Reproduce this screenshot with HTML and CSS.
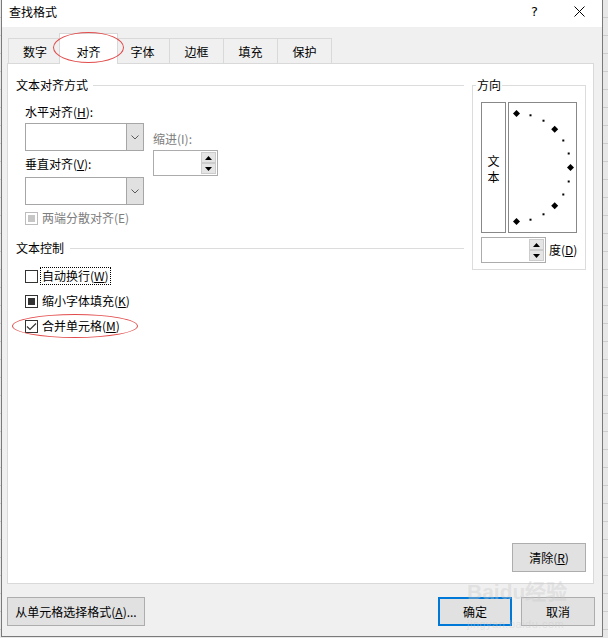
FILE: index.html
```html
<!DOCTYPE html>
<html lang="zh-CN">
<head>
<meta charset="utf-8">
<title>查找格式</title>
<link rel="stylesheet" href="styles.css">
</head>
<body>
<div class="dialog">
  <div class="titlebar">
    <span class="title">查找格式</span>
    <span class="tb-btn tb-help">?</span>
    <span class="tb-btn tb-close"><svg width="11" height="11" viewBox="0 0 11 11"><path d="M0.5 0.5L10.5 10.5M10.5 0.5L0.5 10.5" stroke="#000" stroke-width="1" fill="none"/></svg></span>
  </div>
  <div class="body">
    <div class="tabs">
      <div class="tab tab-first">数字</div>
      <div class="tab tab-active">对齐</div>
      <div class="tab">字体</div>
      <div class="tab">边框</div>
      <div class="tab">填充</div>
      <div class="tab">保护</div>
    </div>
    <div class="panel">
      <div class="panel-main">
        <div class="col-left">
          <div class="group-head"><span>文本对齐方式</span><span class="rule"></span></div>
          <div class="align-block">
            <div class="a-left">
              <div class="lbl">水平对齐(<u>H</u>):</div>
              <div class="combo"><span class="combo-field"></span><span class="combo-btn"><svg width="8" height="5" viewBox="0 0 8 5"><polyline points="0.5,0.5 4,4 7.5,0.5" fill="none" stroke="#5a5a5a" stroke-width="1"/></svg></span></div>
              <div class="lbl lbl-v">垂直对齐(<u>V</u>):</div>
              <div class="combo combo-2"><span class="combo-field"></span><span class="combo-btn"><svg width="8" height="5" viewBox="0 0 8 5"><polyline points="0.5,0.5 4,4 7.5,0.5" fill="none" stroke="#5a5a5a" stroke-width="1"/></svg></span></div>
            </div>
            <div class="a-indent">
              <div class="lbl disabled">缩进(I):</div>
              <div class="spin spin-indent">
                <div class="spin-btns">
                  <span class="spin-b"><svg width="7" height="4" viewBox="0 0 7 4"><polygon points="0,4 3.5,0 7,4" fill="#000"/></svg></span>
                  <span class="spin-b"><svg width="7" height="4" viewBox="0 0 7 4"><polygon points="0,0 3.5,4 7,0" fill="#000"/></svg></span>
                </div>
              </div>
            </div>
          </div>
          <div class="check-row row-dist"><span class="cb cb-disabled"><span class="cb-fill"></span></span><span class="cb-label disabled">两端分散对齐(E)</span></div>
          <div class="group-head head-2"><span>文本控制</span><span class="rule"></span></div>
          <div class="check-row row-1"><span class="cb"></span><span class="cb-label focused">自动换行(<u>W</u>)</span></div>
          <div class="check-row row-2"><span class="cb"><span class="cb-fill"></span></span><span class="cb-label">缩小字体填充(<u>K</u>)</span></div>
          <div class="check-row row-3"><span class="cb"><svg width="11" height="11" viewBox="0 0 11 11"><polyline points="1,5.5 4,8.5 10,2.5" fill="none" stroke="#333" stroke-width="1.2"/></svg></span><span class="cb-label">合并单元格(<u>M</u>)</span></div>
        </div>
        <div class="col-right">
          <div class="orient">
            <div class="orient-title">方向</div>
            <div class="orient-boxes">
              <div class="vtext"><span>文</span><span>本</span></div>
              <div class="dial">
                <svg width="67" height="129" viewBox="0 0 67 129">
                  <g fill="#000">
                    <polygon points="7.5,7 11,10.5 7.5,14 4,10.5"/>
                    <rect x="20.5" y="11.3" width="2" height="2"/>
                    <rect x="33.5" y="16.7" width="2" height="2"/>
                    <polygon points="45.7,22.8 49.2,26.3 45.7,29.8 42.2,26.3"/>
                    <rect x="53.3" y="36.5" width="2" height="2"/>
                    <rect x="58.7" y="49.5" width="2" height="2"/>
                    <polygon points="61.5,61 65,64.5 61.5,68 58,64.5"/>
                    <rect x="58.7" y="77.5" width="2" height="2"/>
                    <rect x="53.3" y="90.5" width="2" height="2"/>
                    <polygon points="45.7,99.2 49.2,102.7 45.7,106.2 42.2,102.7"/>
                    <rect x="33.5" y="110.3" width="2" height="2"/>
                    <rect x="20.5" y="115.7" width="2" height="2"/>
                    <polygon points="7.5,115 11,118.5 7.5,122 4,118.5"/>
                  </g>
                </svg>
              </div>
            </div>
            <div class="deg-row">
              <div class="spin">
                <div class="spin-btns">
                  <span class="spin-b"><svg width="7" height="4" viewBox="0 0 7 4"><polygon points="0,4 3.5,0 7,4" fill="#000"/></svg></span>
                  <span class="spin-b"><svg width="7" height="4" viewBox="0 0 7 4"><polygon points="0,0 3.5,4 7,0" fill="#000"/></svg></span>
                </div>
              </div>
              <span class="deg-label">度(<u>D</u>)</span>
            </div>
          </div>
        </div>
      </div>
      <div class="panel-foot"><div class="btn btn-clear">清除(<u>R</u>)</div></div>
    </div>
    <div class="footer">
      <div class="btn btn-pick">从单元格选择格式(<u>A</u>)...</div>
      <div class="btn btn-ok">确定</div>
      <div class="btn btn-cancel">取消</div>
    </div>
  </div>
</div>
<div class="mark mark-tab"></div>
<div class="mark mark-merge"></div>
<div class="watermark"><div class="wm-main">Baidu经验</div><div class="wm-url">jingyan.baidu.com</div></div>
</body>
</html>
```

FILE: styles.css
```css
* { box-sizing: border-box; }
html, body { margin: 0; height: 100%; overflow: hidden; }
body {
  position: relative;
  background: repeating-linear-gradient(to bottom, #e8e8e8 0, #e8e8e8 17px, #cdcdcd 17px, #cdcdcd 18px);
  font-family: "Noto Sans CJK SC", "Microsoft YaHei", sans-serif;
  font-size: 12px;
  color: #000;
}
u { text-decoration: underline; text-underline-offset: 1px; }

.dialog {
  margin-left: 1px;
  width: 602px;
  height: 637px;
  border: 1px solid #7a7a7a;
  border-top: 0;
  background: #f0f0f0;
  display: flex;
  flex-direction: column;
}
.titlebar { height: 27px; background: #fff; display: flex; align-items: flex-start; flex: none; }
.title { flex: 1; padding: 4px 0 0 7px; line-height: 16px; }
.tb-btn { width: 45px; height: 27px; display: flex; justify-content: center; }
.tb-help { padding-top: 4px; line-height: 16px; font-size: 13px; font-family: "DejaVu Sans", sans-serif; }
.tb-close { padding-top: 6px; }

.body { flex: 1; display: flex; flex-direction: column; padding: 6px 0 10px 5px; }
.tabs { height: 30px; display: flex; align-items: flex-end; padding-left: 1px; flex: none; }
.tab {
  width: 55px; height: 25px; margin-left: -1px;
  border: 1px solid #d9d9d9; border-bottom: 0;
  background: #f0f0f0; text-align: center; line-height: 16px; padding-top: 5px;
}
.tab-first { width: 54px; margin-left: 0; }
.tab-active {
  width: 59px; height: 31px; margin: 0 -2px -1px -3px; padding-top: 10px;
  background: #fff; position: relative; z-index: 1;
}

.panel {
  height: 521px; margin-right: 8px; flex: none;
  border: 1px solid #d9d9d9; background: #fff;
  display: flex; flex-direction: column;
}
.panel-main { display: flex; }
.col-left { width: 456px; padding: 13px 0 0 8px; }
.col-right { width: 114px; margin: 21px 0 0 8px; }

.group-head { display: flex; align-items: center; height: 16px; line-height: 16px; white-space: nowrap; }
.rule { flex: 1; height: 0; border-top: 1px solid #dcdcdc; margin-left: 5px; }
.head-2 { margin-top: 14px; }
.head-2 .rule { margin-left: 6px; }

.align-block { display: flex; margin-top: 11px; padding-left: 9px; }
.a-left { width: 119px; }
.lbl { height: 16px; line-height: 16px; white-space: nowrap; }
.lbl-v { margin-top: 5px; }
.combo { margin-top: 3px; height: 28px; border: 1px solid #a6a6a6; background: #fff; display: flex; }
.combo-2 { margin-top: 5px; }
.combo-field { flex: 1; }
.combo-btn { width: 17px; border-left: 1px solid #a6a6a6; background: #e1e1e1; display: flex; align-items: center; justify-content: center; }
.a-indent { margin: 27px 0 0 9px; }
.disabled { color: #7d7d7d; }

.spin {
  margin-top: 3px; width: 65px; height: 26px;
  border: 1px solid #acacac; background: #fff;
  display: flex; justify-content: flex-end; padding: 1px;
}
.spin-btns { width: 15px; display: flex; flex-direction: column; }
.spin-b { flex: 1; background: #e5e5e5; border: 1px solid #cccccc; display: flex; align-items: center; justify-content: center; }

.check-row { display: flex; align-items: center; height: 18px; padding-left: 9px; white-space: nowrap; }
.row-dist { height: 16px; margin-top: 5px; }
.row-1 { margin-top: 11px; }
.row-2, .row-3 { margin-top: 7px; }
.cb {
  flex: none; width: 13px; height: 13px; border: 1px solid #333; background: #fff;
  display: flex; align-items: center; justify-content: center;
}
.cb-fill { width: 7px; height: 7px; background: #333; }
.cb-disabled { border-color: #bcbcbc; }
.cb-disabled .cb-fill { background: #c6c6c6; }
.cb-label { margin-left: 2px; padding: 0 1px; border: 1px dotted transparent; line-height: 16px; }
.focused { border-color: #000; }

.orient { height: 185px; border: 1px solid #dcdcdc; }
.orient-title { width: fit-content; margin: -9px 0 0 3px; padding: 0 1px; background: #fff; line-height: 16px; }
.orient-boxes { display: flex; gap: 2px; margin: 9px 0 0 8px; }
.vtext {
  width: 25px; height: 131px; border: 1px solid #888;
  display: flex; flex-direction: column; align-items: center; justify-content: center;
  line-height: 16px; padding-top: 2px;
}
.dial { width: 69px; height: 131px; border: 1px solid #888; }
.dial svg { display: block; }
.deg-row { display: flex; align-items: center; margin: 4px 0 0 8px; }
.deg-row .spin { margin-top: 0; }
.deg-label { margin-left: 3px; line-height: 16px; }

.panel-foot { margin-top: auto; display: flex; justify-content: flex-end; padding: 0 7px 11px 0; }
.btn {
  height: 29px; border: 1px solid #adadad; background: #e1e1e1;
  display: flex; align-items: center; justify-content: center; line-height: 16px; white-space: nowrap;
}
.btn-clear { width: 74px; }
.footer { display: flex; margin-top: 13px; padding-right: 7px; flex: none; }
.btn-pick { width: 138px; }
.btn-ok { width: 74px; margin-left: auto; border: 2px solid #0078d7; }
.btn-cancel { width: 74px; margin-left: 9px; }

.mark { position: absolute; z-index: 5; border: 1px solid #e24b4b; border-radius: 50%; }
.mark-tab { left: 53px; top: 32px; width: 71px; height: 31px; }
.mark-merge { left: 12px; top: 314px; width: 126px; height: 24px; }

.watermark { position: absolute; z-index: 4; left: 467px; top: 581px; color: rgba(200, 200, 200, 0.4); font-family: "Liberation Sans", sans-serif; pointer-events: none; }
.wm-main { font-size: 21px; font-weight: bold; line-height: 21px; }
.wm-url { font-size: 11px; line-height: 11px; margin-top: 17px; letter-spacing: 0.5px; }
```
